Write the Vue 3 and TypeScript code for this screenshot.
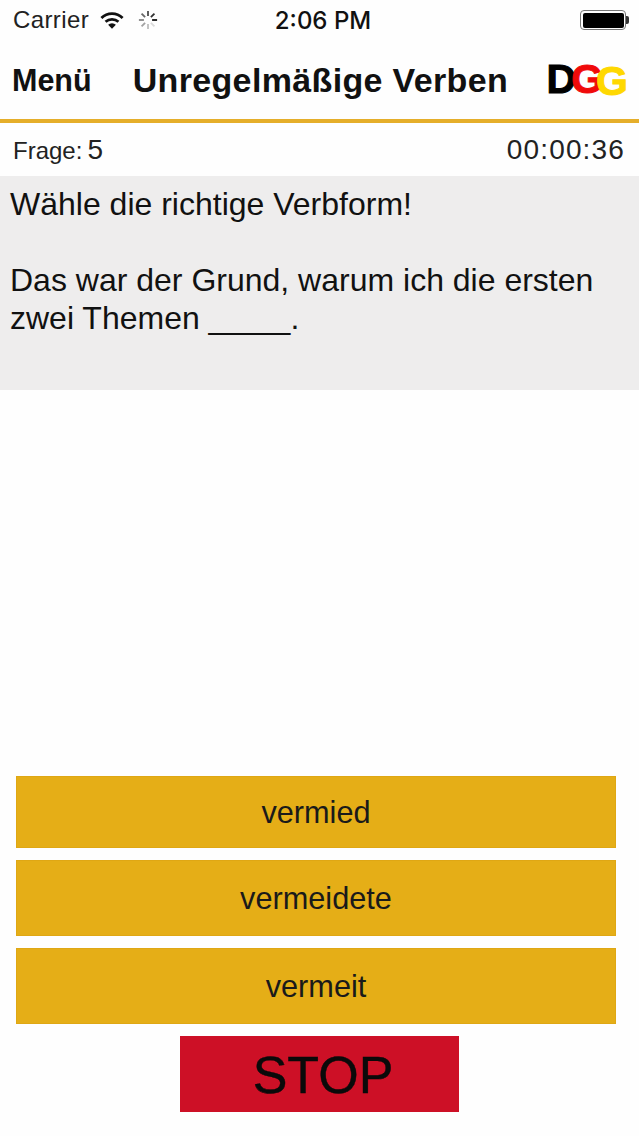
<script setup lang="ts">
const answers = [
  { label: "vermied", tall: false },
  { label: "vermeidete", tall: true },
  { label: "vermeit", tall: true },
];
const spokes = [0, 45, 90, 135, 180, 225, 270, 315];
</script>

<template>
  <div class="screen">
    <div class="status">
      <div class="status-left">
        <span class="carrier">Carrier</span>
        <svg class="wifi" width="24" height="19" viewBox="0 0 26 20">
          <path d="M1.5 7.2 A16.5 16.5 0 0 1 24.5 7.2" fill="none" stroke="#111" stroke-width="3" />
          <path d="M6 11.4 A10.5 10.5 0 0 1 20 11.4" fill="none" stroke="#111" stroke-width="3" />
          <path d="M13 19 L8.8 14.6 A6 6 0 0 1 17.2 14.6 Z" fill="#111" />
        </svg>
        <svg class="spinner" width="20" height="22" viewBox="0 0 22 22">
          <line
            v-for="(a, i) in spokes"
            :key="a"
            x1="11"
            y1="1"
            x2="11"
            y2="6.5"
            stroke="#111"
            stroke-width="2"
            :stroke-opacity="0.15 + ((i + 5) % 8) * 0.12"
            :transform="`rotate(${a} 11 11)`"
          />
        </svg>
      </div>
      <span class="clock">2:06 PM</span>
      <div class="battery">
        <div class="battery-body"><div class="battery-fill"></div></div>
        <div class="battery-tip"></div>
      </div>
    </div>

    <header class="nav">
      <span class="menu">Menü</span>
      <span class="title">Unregelmäßige Verben</span>
      <span class="logo"><span class="d">D</span><span class="g1">G</span><span class="g2">G</span></span>
    </header>

    <div class="info">
      <span class="frage"><span class="frage-label">Frage:</span><span class="frage-num">5</span></span>
      <span class="timer">00:00:36</span>
    </div>

    <section class="question">
      <p>Wähle die richtige Verbform!</p>
      <p>Das war der Grund, warum ich die ersten<br />zwei Themen <span class="blank">_____</span>.</p>
    </section>

    <div class="answers">
      <button v-for="a in answers" :key="a.label" class="answer" :class="{ tall: a.tall }">
        {{ a.label }}
      </button>
      <button class="stop">STOP</button>
    </div>
  </div>
</template>

<style scoped>
.screen {
  width: 639px;
  height: 1136px;
  display: flex;
  flex-direction: column;
  background: #fefefe;
  color: #111;
  font-family: "Liberation Sans", Arial, sans-serif;
  overflow: hidden;
}

.status {
  height: 40px;
  padding: 0 10px 0 13px;
  display: grid;
  grid-template-columns: 1fr auto 1fr;
  align-items: center;
  flex: none;
}
.status-left {
  display: flex;
  align-items: center;
}
.carrier {
  font-size: 24px;
  letter-spacing: 0.4px;
  color: #222;
}
.wifi {
  margin-left: 11px;
}
.spinner {
  margin-left: 14px;
}
.clock {
  margin-left: 4px;
  font-family: Inter, "Liberation Sans", sans-serif;
  font-size: 24px;
  font-weight: 500;
}
.battery {
  justify-self: end;
  display: flex;
  align-items: center;
}
.battery-body {
  width: 46px;
  height: 20px;
  box-sizing: border-box;
  border: 1.5px solid #777;
  border-radius: 4px;
  padding: 1.5px;
}
.battery-fill {
  height: 100%;
  background: #000;
  border-radius: 2px;
}
.battery-tip {
  width: 3px;
  height: 8px;
  background: #333;
  border-radius: 0 2px 2px 0;
}

.nav {
  height: 79px;
  flex: none;
  box-sizing: border-box;
  padding: 2px 14px 0 12px;
  display: flex;
  align-items: center;
}
.menu {
  font-size: 30.5px;
  font-weight: 700;
}
.title {
  margin-left: 41px;
  font-size: 34px;
  letter-spacing: 0.35px;
  font-weight: 700;
}
.logo {
  margin-left: auto;
  font-size: 41px;
  font-weight: 700;
  letter-spacing: -6px;
  line-height: 1;
  display: flex;
  padding-right: 3px;
  -webkit-text-stroke: 1px currentColor;
}
.logo .d {
  color: #000;
  letter-spacing: -5px;
}
.logo .g1 {
  color: #f00a0a;
  letter-spacing: -7px;
}
.logo .g2 {
  margin-top: 2px;
  color: #ffd800;
}

.info {
  flex: none;
  height: 57px;
  box-sizing: border-box;
  border-top: 4px solid #e5ae2a;
  padding: 1px 14px 0 13px;
  display: flex;
  justify-content: space-between;
  align-items: center;
}
.frage {
  display: flex;
  align-items: baseline;
  gap: 5px;
}
.frage-label {
  font-size: 24px;
  color: #222;
}
.frage-num {
  font-size: 28px;
  color: #222;
}
.timer {
  font-size: 28px;
  letter-spacing: 1.15px;
  color: #222;
}

.question {
  flex: none;
  height: 214px;
  box-sizing: border-box;
  background: #eeeded;
  padding: 9px 10px;
  font-size: 32px;
  line-height: 38px;
}
.question p {
  margin: 0 0 38px;
}
.blank {
  letter-spacing: -1.8px;
  padding-right: 2px;
}

.answers {
  margin-top: auto;
  padding-bottom: 24px;
  display: flex;
  flex-direction: column;
  gap: 12px;
}
.answer {
  height: 72px;
  margin: 0 23px 0 16px;
  border: 1px solid #dfa714;
  background: #e5ae17;
  color: #1a1a1a;
  font: 30.7px "Liberation Sans", Arial, sans-serif;
  padding: 2px 0 0;
}
.answer.tall {
  height: 76px;
}
.stop {
  align-self: center;
  width: 279px;
  height: 76px;
  border: none;
  padding: 2px 0 0 7px;
  background: #cd1026;
  color: #0a0a0a;
  font: 52px "Liberation Sans", Arial, sans-serif;
  -webkit-text-stroke: 0.4px #0a0a0a;
}
</style>
